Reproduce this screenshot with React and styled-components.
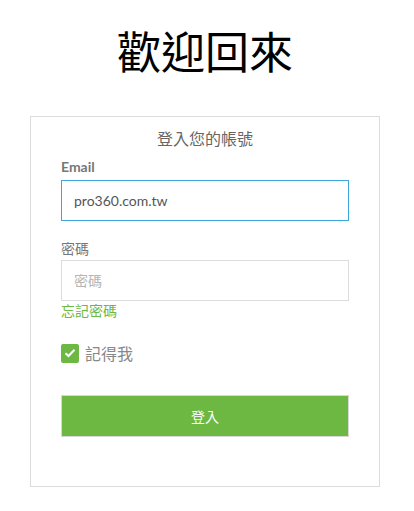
import React, { useState } from "react";
import styled, { createGlobalStyle } from "styled-components";

const GlobalStyle = createGlobalStyle`
  body {
    margin: 0;
    background: #fff;
    font-family: Lato, "Noto Sans CJK TC", sans-serif;
  }
`;

const Page = styled.main`
  display: flex;
  flex-direction: column;
  align-items: center;
  padding: 18px 4px 0 0;
`;

const Heading = styled.h1`
  margin: 0 0 34px;
  font-family: "Noto Sans CJK TC", sans-serif;
  font-size: 44px;
  font-weight: 400;
  line-height: 64px;
  color: #000;
`;

const Card = styled.section`
  width: 350px;
  box-sizing: border-box;
  border: 1px solid #dcdcdc;
  padding: 10px 30px 49px;
  display: flex;
  flex-direction: column;
`;

const CardTitle = styled.h2`
  margin: 0 0 6px;
  text-align: center;
  font-family: Lato, "Noto Sans CJK TC", sans-serif;
  font-size: 16px;
  font-weight: 400;
  line-height: 24px;
  color: #666;
`;

const Label = styled.label`
  display: block;
  font-size: 14px;
  line-height: 20px;
  font-weight: ${p => (p.$bold ? 700 : 400)};
  color: #777;
  margin: ${p => p.$top || 0}px 0 ${p => p.$bottom || 1}px;
`;

const Input = styled.input`
  display: block;
  width: 100%;
  height: 41px;
  box-sizing: border-box;
  padding: 0 12px;
  border: 1px solid ${p => (p.$focus ? "#3ca5dc" : "#dcdcdc")};
  outline: none;
  font-family: Lato, "Noto Sans CJK TC", sans-serif;
  font-size: 14px;
  color: #555;
  background: #fff;
  &::placeholder {
    color: #b5b5b5;
  }
`;

const Forgot = styled.a`
  font-size: 14px;
  line-height: 20px;
  color: #6db843;
  text-decoration: none;
  align-self: flex-start;
`;

const RememberRow = styled.label`
  display: flex;
  align-items: center;
  gap: 6px;
  margin-top: 20px;
  font-size: 16px;
  color: #888;
  cursor: pointer;
`;

const Box = styled.span`
  width: 18px;
  height: 19px;
  border-radius: 2px;
  background: #6db843;
  display: inline-flex;
  align-items: center;
  justify-content: center;
`;

const SubmitButton = styled.button`
  margin-top: 30px;
  width: 100%;
  height: 42px;
  border: 1px solid #d8d8d8;
  background: #6db843;
  color: #fff;
  font-family: Lato, "Noto Sans CJK TC", sans-serif;
  font-size: 14px;
  cursor: pointer;
`;

const App = () => {
  const [email, setEmail] = useState("pro360.com.tw");
  const [remember, setRemember] = useState(true);
  return (
    <Page>
      <GlobalStyle />
      <Heading>歡迎回來</Heading>
      <Card>
        <CardTitle>登入您的帳號</CardTitle>
        <Label $bold $bottom={3} htmlFor="email">Email</Label>
        <Input
          id="email"
          $focus
          type="text"
          value={email}
          onChange={e => setEmail(e.target.value)}
        />
        <Label $top={18} htmlFor="pw">密碼</Label>
        <Input id="pw" type="password" placeholder="密碼" />
        <Forgot href="#">忘記密碼</Forgot>
        <RememberRow onClick={() => setRemember(!remember)}>
          <Box>
            {remember && (
              <svg width="12" height="10" viewBox="0 0 12 10">
                <path
                  d="M1.5 5.2 L4.5 8 L10.5 1.8"
                  fill="none"
                  stroke="#fff"
                  strokeWidth="2"
                />
              </svg>
            )}
          </Box>
          記得我
        </RememberRow>
        <SubmitButton type="submit">登入</SubmitButton>
      </Card>
    </Page>
  );
};

export default App;
